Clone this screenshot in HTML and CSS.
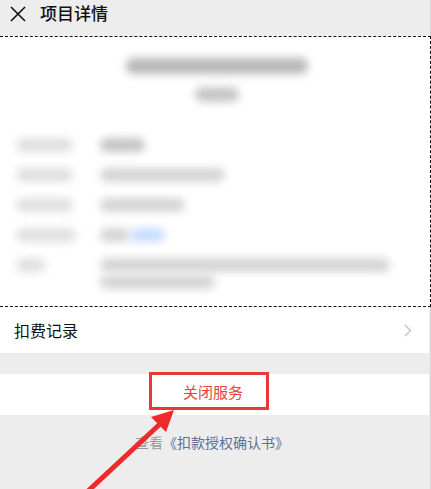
FILE: index.html
```html
<!DOCTYPE html>
<html lang="zh">
<head>
<meta charset="utf-8">
<title>项目详情</title>
<link rel="stylesheet" href="styles.css">
</head>
<body>
<div class="page">
  <header class="topbar">
    <svg class="close-icon" width="16" height="16" viewBox="0 0 16 16"><path d="M1 1L15 15M15 1L1 15" stroke="#111" stroke-width="1.6" fill="none"/></svg>
    <h1 class="title">项目详情</h1>
  </header>

  <section class="card">
    <div class="blur-head">
      <div class="bar bar-title"></div>
      <div class="bar bar-sub"></div>
    </div>
    <div class="blur-rows">
      <div class="bar lab w57"></div><div class="val"><div class="bar dark w45"></div></div>
      <div class="bar lab w57"></div><div class="val"><div class="bar w125"></div></div>
      <div class="bar lab w57"></div><div class="val"><div class="bar w85"></div></div>
      <div class="bar lab w60"></div><div class="val"><div class="bar w30"></div><div class="bar blue w35"></div></div>
      <div class="bar lab w30"></div><div class="val multi"><div class="bar w290"></div><div class="bar w115"></div></div>
    </div>
  </section>

  <a class="cell">
    <span class="cell-text">扣费记录</span>
    <svg class="chevron" width="8" height="13" viewBox="0 0 8 13"><path d="M1 1L6.5 6.5L1 12" stroke="#c7c7cc" stroke-width="1.5" fill="none"/></svg>
  </a>

  <div class="gap"></div>

  <div class="action">
    <span class="close-btn">关闭服务</span>
  </div>

  <p class="agreement"><span class="muted">查看</span>《扣款授权确认书》</p>

  <svg class="arrow" width="431" height="489" viewBox="0 0 431 489">
    <line x1="87" y1="492" x2="160" y2="424" stroke="#ee2a2a" stroke-width="5"/>
    <polygon points="174,410 151,417 166,432" fill="#ee2a2a"/>
  </svg>
</div>
</body>
</html>
```

FILE: styles.css
```css
* { box-sizing: border-box; }
html, body { margin: 0; padding: 0; }
body {
  background: #ededed;
  font-family: "Noto Sans CJK SC", "Noto Sans", sans-serif;
  color: #111;
  width: 431px;
  height: 489px;
  overflow: hidden;
}
.page {
  position: relative;
  width: 431px;
  height: 489px;
  background: #ededed;
  border-right: 1px solid #d6d6d6;
}
.topbar {
  height: 36px;
  display: flex;
  align-items: flex-start;
  padding: 5px 0 0 10px;
  gap: 14px;
}
.close-icon { margin-top: 1px; }
.title {
  margin: 0;
  font-size: 17px;
  font-weight: 500;
  line-height: 17px;
  margin-top: -1px;
  color: #111;
}
.card {
  height: 271px;
  background: #fff;
  border-top: 1px dashed #111;
  border-right: 1px dashed #111;
  border-bottom: 1px dashed #111;
  width: 431px;
  padding-top: 21px;
}
.blur-head {
  display: flex;
  flex-direction: column;
  align-items: center;
  gap: 13px;
  padding-left: 4px;
}
.bar {
  height: 14px;
  background: #d4d4d4;
  border-radius: 7px;
  filter: blur(4.5px);
}
.bar-title { width: 182px; height: 16px; background: #b8b8b8; }
.bar-sub { width: 44px; height: 15px; background: #c6c6c6; }
.blur-rows {
  margin-top: 36px;
  padding-left: 16px;
  display: grid;
  grid-template-columns: 84px 1fr;
  grid-auto-rows: 30px;
  align-items: start;
}
.lab { background: #e0e0e0; }
.dark { background: #c4c4c4; }
.val { display: flex; gap: 0; }
.val.multi { flex-direction: column; gap: 3px; }
.blue { background: #c8dcff; }
.w30 { width: 30px; }
.w35 { width: 35px; }
.w45 { width: 45px; }
.w57 { width: 57px; }
.w60 { width: 60px; }
.w85 { width: 85px; }
.w115 { width: 115px; }
.w125 { width: 125px; }
.w290 { width: 290px; }
.cell {
  height: 46px;
  background: #fff;
  display: flex;
  align-items: center;
  justify-content: space-between;
  padding: 0 17px 0 14px;
  width: 429px;
}
.cell-text { font-size: 16px; color: #111; }
.gap { height: 21px; }
.action {
  height: 41px;
  background: #fff;
  width: 429px;
  display: flex;
  justify-content: center;
  align-items: flex-start;
}
.close-btn {
  margin-top: -2px;
  margin-left: -11px;
  width: 120px;
  height: 38px;
  padding-left: 8px;
  border: 3px solid #e8383a;
  display: flex;
  align-items: center;
  justify-content: center;
  font-size: 15px;
  color: #e64340;
  background: #fff;
}
.agreement {
  margin: 17px 0 0;
  text-align: center;
  font-size: 14px;
  color: #5f6f96;
  padding-right: 6px;
}
.muted { color: #999; }
.arrow {
  position: absolute;
  left: 0;
  top: 0;
  pointer-events: none;
}
```
